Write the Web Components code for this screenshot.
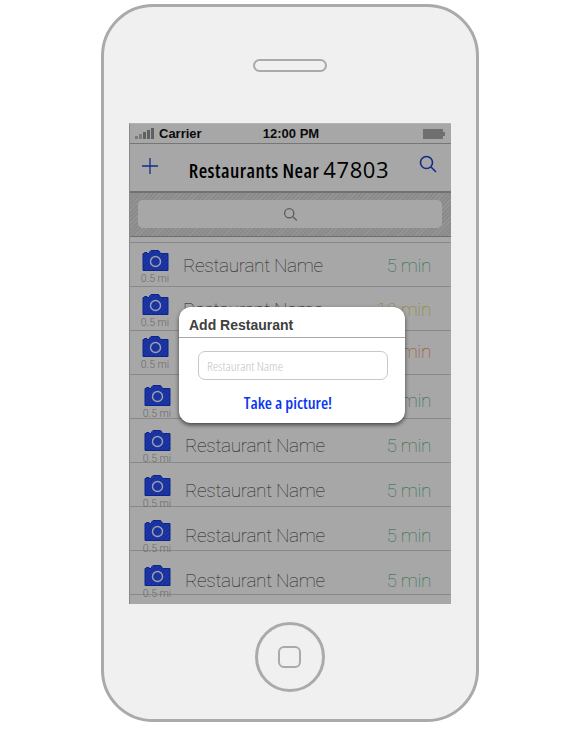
<!DOCTYPE html>
<html><head><meta charset="utf-8"><style>
html,body{margin:0;padding:0;background:#fff;font-family:"Liberation Sans",sans-serif}
</style></head><body>
<x-phone>
  <x-status></x-status>
  <x-nav>Restaurants Near <b>47803</b></x-nav>
  <x-searchbar></x-searchbar>
  <x-list>
    <x-row shift="7" indent="0" time="5 min" color="#3f9a6c"></x-row>
    <x-row shift="7" indent="0" time="10 min" color="#d4bc30"></x-row>
    <x-row shift="5" indent="0" time="15 min" color="#d47030"></x-row>
    <x-row shift="10" indent="2" time="5 min" color="#3f9a6c"></x-row>
    <x-row shift="11" indent="2" time="5 min" color="#3f9a6c"></x-row>
    <x-row shift="12" indent="2" time="5 min" color="#3f9a6c"></x-row>
    <x-row shift="13" indent="2" time="5 min" color="#3f9a6c"></x-row>
    <x-row shift="14" indent="2" time="5 min" color="#3f9a6c"></x-row>
  </x-list>
  <x-dialog slot="overlay" heading="Add Restaurant" placeholder="Restaurant Name" action="Take a picture!"></x-dialog>
</x-phone>
<script>
const def=(name,html,init)=>customElements.define(name,class extends HTMLElement{
  constructor(){super();this.attachShadow({mode:'open'}).innerHTML=html}
  connectedCallback(){init&&init(this,this.shadowRoot)}
});
const HAND='"Open Sans","Noto Sans",sans-serif';
const THIN='Roboto,"Liberation Sans",sans-serif';
def('x-phone',`<style>
:host{display:flex;flex-direction:column;align-items:center;box-sizing:border-box;width:378px;height:718px;margin:4px 0 0 101px;background:#f0f0f0;border:3px solid #aaa;border-radius:52px}
.speaker{box-sizing:border-box;width:74px;height:13px;margin-top:52px;border:2px solid #aaa;border-radius:7px;flex:none}
.screen{position:relative;box-sizing:border-box;width:322px;height:481px;margin-top:51px;flex:none;overflow:hidden;background:#f0f0f0;border-top:1px solid #b4b4b4;border-left:1px solid #888;display:flex;flex-direction:column}
.dim{position:absolute;inset:0;background:rgba(0,0,0,.3)}
.home{box-sizing:border-box;width:70px;height:70px;margin-top:18px;border:3px solid #aaa;border-radius:50%;display:flex;align-items:center;justify-content:center;flex:none}
.home i{display:block;box-sizing:border-box;width:23px;height:22px;margin-right:1px;border:2px solid #aaa;border-radius:6px}
</style><div class="speaker"></div><div class="screen"><slot></slot><div class="dim"></div><slot name="overlay"></slot></div><div class="home"><i></i></div>`);
def('x-status',`<style>
:host{display:flex;align-items:center;box-sizing:border-box;height:20px;padding:0 6px 0 5px;border-bottom:1px solid #aaa;font:bold 13px "Liberation Sans",sans-serif;color:#111;flex:none;justify-content:space-between}
.bars{display:flex;align-items:flex-end;gap:1px;height:11px;width:19px}
.bars i{display:block;width:3px;background:#b0b0b0}
.bars i:nth-child(n+3){background:#8a8a8a}
.c{margin-left:5px}
.t{transform:translateX(1px)}
.bat{width:20px;height:10px;background:#a0a0a0;position:relative}
.bat:after{content:"";position:absolute;right:-2px;top:3px;width:2px;height:4px;background:#a0a0a0}
.w{display:flex;align-items:center;width:90px}
.w.r{justify-content:flex-end;padding-right:2px;box-sizing:border-box}
</style><div class="w"><div class="bars"><i style="height:3px"></i><i style="height:5px"></i><i style="height:7px"></i><i style="height:9px"></i><i style="height:11px"></i></div><span class="c">Carrier</span></div><span class="t">12:00 PM</span><div class="w r"><div class="bat"></div></div>`);
def('x-nav',`<style>
:host{display:flex;align-items:center;justify-content:space-between;box-sizing:border-box;height:49px;padding:0 14px 2px 11px;border-bottom:2px solid #a4a4a4;flex:none}
.title{font:600 19.5px ${HAND};font-stretch:condensed;color:#000;letter-spacing:.45px;margin-top:4px;white-space:nowrap}
::slotted(b){font:400 22px ${HAND};letter-spacing:.6px;color:#000}
svg{display:block;fill:none;stroke:#1d3fc4}
</style><svg width="18" height="18" viewBox="0 0 18 18" stroke-width="1.3" style="margin-top:-2px"><path d="M9 1v16M1 9h16"/></svg><div class="title"><slot></slot></div><svg width="18" height="18" viewBox="0 0 18 18" stroke-width="1.6" style="margin-top:-6px"><circle cx="7.5" cy="7.5" r="6"/><path d="M12 12l5 5"/></svg>`);
def('x-searchbar',`<style>
:host{display:flex;box-sizing:border-box;height:44px;padding:7px 9px 8px 8px;flex:none;border-bottom:1px solid #9c9c9c;
background:repeating-linear-gradient(135deg,#d6d6d6 0 1px,#c8c8c8 1px 3px)}
.f{flex:1;background:#f0f0f0;border-radius:5px;display:flex;align-items:center;justify-content:center}
svg{display:block;fill:none;stroke:#888}
</style><div class="f"><svg width="15" height="15" viewBox="0 0 15 15" stroke-width="1.4"><circle cx="6.2" cy="6.2" r="4.6"/><path d="M9.6 9.6l4.2 4"/></svg></div>`);
def('x-list',`<style>
:host{display:flex;flex-direction:column;flex:1;margin-top:5px;border-top:1px solid #c4c4c4;min-height:0}
</style><slot></slot>`);
def('x-camera',`<style>:host{display:block;width:27px;height:21px}svg{display:block}</style>
<svg width="27" height="21" viewBox="0 0 27 21"><defs><pattern id="h" width="3" height="3" patternUnits="userSpaceOnUse" patternTransform="rotate(45)"><rect width="3" height="3" fill="#2a50ee"/><rect width="1" height="3" fill="#1f3fd8"/></pattern></defs>
<path d="M1 3.5h1.5V2.5h2.5v1h2L8 1.5l1-1h7.5l1 1 1 2H26v17H1z" fill="url(#h)" stroke="#1534c8" stroke-width="1"/>
<circle cx="13.5" cy="11.5" r="5" fill="none" stroke="#e6e6f4" stroke-width="1.4"/></svg>`);
def('x-row',`<style>
:host{display:block;box-sizing:border-box;height:44px;border-bottom:1px solid #c4c4c4;flex:none}
.in{display:flex;align-items:flex-start;height:36px}
.l{display:flex;flex-direction:column;align-items:center;width:40px;flex:none;margin-left:5px}
.d{font:300 10.5px ${THIN};color:#999;line-height:13px;margin-top:1px;white-space:nowrap}
.n{font:100 19px ${THIN};letter-spacing:-.35px;color:#333;line-height:30px;margin-top:1px;margin-left:8px;white-space:nowrap}
.t{font:100 19px ${THIN};letter-spacing:-.35px;line-height:30px;margin-top:1px;margin-left:auto;margin-right:20px;white-space:nowrap}
</style><div class="in"><div class="l"><x-camera></x-camera><span class="d">0.5 mi</span></div><span class="n">Restaurant Name</span><span class="t"></span></div>`,(h,s)=>{
  const g=a=>h.getAttribute(a);
  const i=s.querySelector('.in');i.style.paddingTop=g('shift')+'px';i.style.paddingLeft=g('indent')+'px';
  const t=s.querySelector('.t');t.textContent=g('time');t.style.color=g('color');
});
def('x-dialog',`<style>
:host{position:absolute;left:49px;top:183px;box-sizing:border-box;width:226px;height:116px;background:#fff;border-radius:12px;box-shadow:0 2px 4px rgba(0,0,0,.6);display:flex;flex-direction:column}
.h{box-sizing:border-box;height:31px;border-bottom:1px solid #a8a8a8;padding:10px 0 0 10px;font:bold 14px/16px "Liberation Sans",sans-serif;color:#404040}
.i{box-sizing:border-box;height:29px;margin:13px 17px 0 19px;border:1px solid #c8c8c8;border-radius:7px;padding:0 8px;font:300 13.5px/28px ${HAND};font-stretch:condensed;color:#c4c4c4}
.a{margin-top:14px;padding-right:8px;text-align:center;font:600 16.5px/18px ${HAND};font-stretch:condensed;color:#0a36f0}
</style><div class="h"></div><div class="i"></div><div class="a"></div>`,(h,s)=>{
  s.querySelector('.h').textContent=h.getAttribute('heading');
  s.querySelector('.i').textContent=h.getAttribute('placeholder');
  s.querySelector('.a').textContent=h.getAttribute('action');
});
</script>
</body></html>
